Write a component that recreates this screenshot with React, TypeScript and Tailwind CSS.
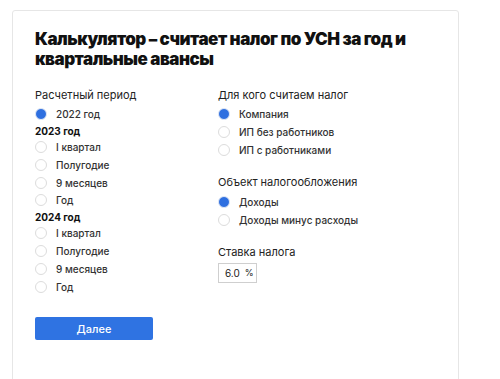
import React from "react";

const font = { fontFamily: "Inter, 'Noto Sans', sans-serif" };

function Radio({ label, checked, h }: { label: string; checked?: boolean; h: string }) {
  return (
    <div className={`flex items-center ${h}`}>
      {checked ? (
        <span className="box-border h-[12px] w-[12px] rounded-full border border-[#e1e8f5] bg-[#2e6fe0]" />
      ) : (
        <span className="box-border h-[12px] w-[12px] rounded-full border border-[#dcdcdc] bg-white" />
      )}
      <span className="ml-[9px] text-[10px] font-medium leading-none text-[#333]">{label}</span>
    </div>
  );
}

function Label({ children }: { children: React.ReactNode }) {
  return <div className="flex h-[18px] items-center text-[11px] leading-none text-[#222]">{children}</div>;
}

function YearHead({ children }: { children: React.ReactNode }) {
  return (
    <div className="box-border h-[15.6px] pt-[2px] text-[10px] font-bold leading-[13.6px] text-[#111]">{children}</div>
  );
}

const L = "h-[17.7px]";
const R = "h-[18px]";

export default function App() {
  return (
    <div className="h-[379px] w-[500px] overflow-hidden bg-white" style={font}>
      <div className="ml-[12px] mt-[10px] box-border h-[400px] w-[447px] rounded-t-[3px] border border-[#e6e6e6] bg-white pl-[22px] pt-[18px]">
        <h1 className="text-[17px] font-black leading-[20px] tracking-[-0.5px] text-[#111]">
          Калькулятор – считает налог по УСН за год и
          <br />
          квартальные авансы
        </h1>
        <div className="mt-[17px] flex">
          <div className="w-[183px]">
            <Label>Расчетный период</Label>
            <div className="mt-[1px]">
              <Radio h={L} label="2022 год" checked />
              <YearHead>2023 год</YearHead>
              <Radio h={L} label="I квартал" />
              <Radio h={L} label="Полугодие" />
              <Radio h={L} label="9 месяцев" />
              <Radio h={L} label="Год" />
              <YearHead>2024 год</YearHead>
              <Radio h={L} label="I квартал" />
              <Radio h={L} label="Полугодие" />
              <Radio h={L} label="9 месяцев" />
              <Radio h={L} label="Год" />
            </div>
            <button className="mt-[22px] flex h-[23px] w-[118px] items-center justify-center rounded-[2px] bg-[#2f73e2] text-[11px] font-medium text-white">
              Далее
            </button>
          </div>
          <div>
            <Label>Для кого считаем налог</Label>
            <div className="mt-[1px]">
              <Radio h={R} label="Компания" checked />
              <Radio h={R} label="ИП без работников" />
              <Radio h={R} label="ИП с работниками" />
            </div>
            <div className="mt-[14px]">
              <Label>Объект налогообложения</Label>
              <div className="mt-[2px]">
                <Radio h={R} label="Доходы" checked />
                <Radio h={R} label="Доходы минус расходы" />
              </div>
            </div>
            <div className="mt-[14px]">
              <Label>Ставка налога</Label>
              <div className="mt-[2px] box-border flex h-[20px] w-[39px] items-center border border-[#cfcfcf] pl-[6px] text-[10px] text-[#222]">
                <span>6.0</span>
                <span className="ml-[5px] text-[9px]">%</span>
              </div>
            </div>
          </div>
        </div>
      </div>
    </div>
  );
}
